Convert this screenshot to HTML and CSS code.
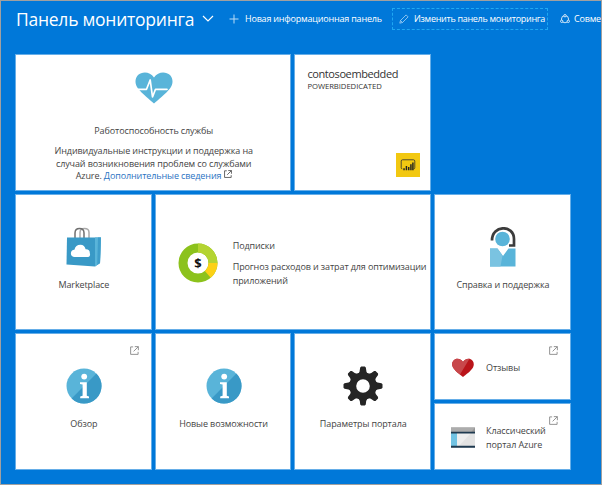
FILE: index.html
```html
<!DOCTYPE html>
<html lang="ru">
<head>
<meta charset="utf-8">
<title>Панель мониторинга</title>
<link rel="stylesheet" href="styles.css">
</head>
<body>
<svg class="defs" width="0" height="0" aria-hidden="true">
  <symbol id="external" viewBox="0 0 10 10"><path d="M3.5 1H.7v8.3H9V6.5M5.3.7h4v4M9.2.8 4 6" fill="none" stroke="currentColor" stroke-width="1"/></symbol>
  <symbol id="info" viewBox="0 0 36 36"><circle cx="18" cy="18" r="17.5" fill="#59b4d9"/><path d="M30.4 5.6A17.5 17.5 0 0 1 5.6 30.4Z" fill="#3999c6"/><circle cx="18.2" cy="8.6" r="2.9" fill="#fff"/><path d="M14 14.2h6.8v13.6l2.200.7v1.700h-8.800v-1.700l2.400-.7V16.500l-2.600-.6Z" fill="#fff"/></symbol>
</svg>
<div class="portal">
  <header class="bar">
    <h1 class="title">Панель мониторинга</h1>
    <svg class="chevron" viewBox="0 0 12 8"><path d="m1 1 5 5 5-5" fill="none" stroke="#fff" stroke-width="1.2"/></svg>
    <a class="command new"><svg class="icon" viewBox="0 0 10 10"><path d="M5 .5v9M.5 5h9" stroke="#b9dcf7" fill="none"/></svg><span>Новая информационная панель</span></a>
    <a class="command edit"><svg class="icon" viewBox="0 0 10 10"><path d="m.8 9.2.7-2.7 5.6-5.6 2 2-5.6 5.6ZM1.5 6.5l2 2" stroke="#a9d3f5" stroke-width=".8" fill="none"/></svg><span>Изменить панель мониторинга</span></a>
    <a class="command share"><svg class="icon" viewBox="0 0 10 10"><circle cx="5" cy="5.2" r="3.6" stroke="#fff" stroke-width=".8" fill="none"/><g fill="#0078d9" stroke="#fff" stroke-width=".8"><circle cx="5" cy="1.7" r="1.2"/><circle cx="1.7" cy="7.3" r="1.2"/><circle cx="8.3" cy="7.3" r="1.2"/></g></svg><span>Совме</span></a>
  </header>
  <main class="tiles">
    <section class="tile wide health">
      <svg class="heart" viewBox="0 0 38 32"><path d="M19 31.5C16 29 6.500 21 3 16.500-.5 12-.2 6.500 3 3 7-.8 15-.8 19 5.500 23-.8 31-.8 35 3c3.200 3.500 3.500 9 0 13.500C31.500 21 22 29 19 31.500Z" fill="#59b4d9"/><path d="M3 17.300h8.500l3.700-9.300 2.300 17 3-7.700H32" fill="none" stroke="#fff" stroke-width="1.700" stroke-linejoin="round" stroke-linecap="round"/></svg>
      <h2 class="label">Работоспособность службы</h2>
      <p class="copy">Индивидуальные инструкции и поддержка на<br>случай возникновения проблем со службами<br>Azure. <a class="link">Дополнительные сведения</a> <svg class="inline-ext"><use href="#external"/></svg></p>
    </section>
    <section class="tile resource">
      <h2 class="resource-name">contosoembedded</h2>
      <p class="resource-type">POWERBIDEDICATED</p>
      <svg class="powerbi" viewBox="0 0 23 23"><path d="M0 0h23v23H0z" fill="#f2c811"/><path d="M6 15.200q-1 0-1-1V7.800q0-1.300 1.300-1.300h10.400q1.300 0 1.300 1.300v6.400q0 1-1 1" fill="none" stroke="#333" stroke-width=".8"/><path d="M7.700 16.500v-2M10 16.500V12.500M12.200 16.500v-3M14.300 16.500V10.800M16.200 16.500V9" stroke="#222" stroke-width="1.400"/></svg>
    </section>
    <section class="tile app market">
      <svg class="glyph" viewBox="0 0 40 40"><g fill="none" stroke-width="1.500"><path d="M15 11V5.500q0-4 4.500-4t4.500 4V11" stroke="#aaa"/><path d="M10 11V6q0-4.500 4.500-4.500T19 6v5" stroke="#707070"/></g><path d="M2 10.500h28l6 0-1 25.500-5 3.500-28.500-2Z" fill="#3999c6"/><path d="m30 10.500 5.800 0-.8 25.500-5 3.500Z" fill="#59b4d9"/><path d="m33 10.500 2.800 0-.8 25.500-2.800 2Z" fill="#3f9ecb"/><path d="M9.500 30q-3.700-.4-3.600-3.800.2-3.200 3.500-3.500 1.200-5 6-5 4.400.2 5.200 4.600 4.300-.2 4.200 3.700 1 3.400-1.500 4Z" fill="#fff"/></svg>
      <h2 class="label">Marketplace</h2>
    </section>
    <section class="tile wide billing">
      <svg class="donut" viewBox="0 0 40 40"><circle cx="20" cy="20" r="15" fill="none" stroke="#8cc21c" stroke-width="9"/><path d="M20 5A15 15 0 0 1 35 20" fill="none" stroke="#b4d432" stroke-width="9"/><path d="M35 20a15 15 0 0 1-5.200 11.300" fill="none" stroke="#fcd116" stroke-width="9"/><text class="dollar" x="20" y="24.800" text-anchor="middle">$</text></svg>
      <div class="billing-text"><h2 class="label">Подписки</h2><p class="copy">Прогноз расходов и затрат для оптимизации<br>приложений</p></div>
    </section>
    <section class="tile app support">
      <svg class="glyph" viewBox="0 0 40 40"><path d="M9 13.500C9-2.500 31-2.500 31 12v6.500h-5" fill="none" stroke="#3c3c3c" stroke-width="2.700"/><circle cx="19.500" cy="12" r="7.300" fill="#59b4d9"/><path d="M7 21.500h7.500L20 29l5.500-7.500h7v18H7Z" fill="#59b4d9"/><path d="M7 21.500h7.500l5 7-2 11H7Z" fill="#7ac3e1"/></svg>
      <h2 class="label">Справка и поддержка</h2>
    </section>
    <section class="tile app">
      <svg class="external"><use href="#external"/></svg>
      <svg class="glyph info"><use href="#info"/></svg>
      <h2 class="label">Обзор</h2>
    </section>
    <section class="tile app">
      <svg class="glyph info"><use href="#info"/></svg>
      <h2 class="label">Новые возможности</h2>
    </section>
    <section class="tile app">
      <svg class="glyph" viewBox="-20 -20 40 40"><defs><path id="tooth" d="M-5-11.500 Q-3-14-2.800-18.500L-1.800-19.500H1.800L2.800-18.500Q3-14 5-11.500Z"/></defs><g fill="#252525"><use href="#tooth"/><use href="#tooth" transform="rotate(45)"/><use href="#tooth" transform="rotate(90)"/><use href="#tooth" transform="rotate(135)"/><use href="#tooth" transform="rotate(180)"/><use href="#tooth" transform="rotate(225)"/><use href="#tooth" transform="rotate(270)"/><use href="#tooth" transform="rotate(315)"/></g><circle r="10.300" fill="none" stroke="#252525" stroke-width="7"/></svg>
      <h2 class="label">Параметры портала</h2>
    </section>
    <div class="stack">
      <section class="tile small">
        <svg class="external"><use href="#external"/></svg>
        <svg class="small-icon" viewBox="0 0 24 24"><path d="M12 21C9 18.500 4 15 2 11.500-.2 7.500 2 3.500 5.500 2.800 8.500 2.500 11 4 12 6c1-2 3.500-3.500 6.500-3.200C22 3.500 24 7.500 22 11.500 20 15 15 18.500 12 21Z" fill="#ba141a"/><path d="M12 6C11 4 8.500 2.500 5.500 2.800 2 3.500-.2 7.500 2 11.500 3.300 14 6.500 16.500 9 18.600L18.500 2.800C15.500 2.500 13 4 12 6Z" fill="#c8474b"/></svg>
        <h2 class="label">Отзывы</h2>
      </section>
      <section class="tile small classic">
        <svg class="external"><use href="#external"/></svg>
        <svg class="small-icon" viewBox="0 0 24 24"><path d="M0 1.500h24v5H0z" fill="#969696"/><path d="M0 1.500h24l-4 5H0Z" fill="#acacac"/><path d="M0 6h24v15.500H0z" fill="#e3e3e3"/><path d="M6 7h14L8 20H6Z" fill="#eee"/><path d="M0 7h6v13H0z" fill="#72c3e3"/><path d="M0 5.700h24v1.700H0zM0 19.800h24v2H0z" fill="#1f3a50"/></svg>
        <h2 class="label">Классический<br>портал Azure</h2>
      </section>
    </div>
  </main>
</div>
</body>
</html>
```
FILE: styles.css
```css
* { box-sizing: border-box; }
body { margin: 0; font-family: "Open Sans", "Noto Sans", sans-serif; }
h1, h2, p { margin: 0; font-weight: 400; }
svg { display: block; flex: none; }
.defs { position: absolute; }
.portal { width: 602px; height: 485px; overflow: hidden; background: #0078d9; border: 1px solid #a0a0a0; }
.bar { display: flex; align-items: center; height: 53px; padding: 0 0 18px 15px; color: #fff; white-space: nowrap; }
.title { width: 179px; font-size: 17.5px; line-height: 24px; letter-spacing: -.25px; margin-top: 1px; }
.chevron { width: 12px; height: 8px; margin-left: 7px; }
.command { display: flex; align-items: center; font-size: 9px; line-height: 14px; letter-spacing: -.2px; }
.icon { width: 10px; height: 10px; }
.new { width: 153px; margin-left: 15px; gap: 6px; }
.edit { width: 156px; height: 22px; margin-left: 10px; padding-left: 6px; gap: 5px; border: 1px dashed #1fa8f2; letter-spacing: -.3px; }
.share { margin-left: 12px; gap: 4px; }
.tiles { display: grid; grid-template-columns: repeat(4, 136.7px); grid-template-rows: repeat(3, 136.7px); gap: 3px; padding-left: 14px; }
.tile { position: relative; background: #fff; background-clip: padding-box; border: 1px solid rgba(255, 255, 255, .4); color: #444; }
.wide { grid-column: span 2; }
.label, .copy { font-size: 9px; line-height: 13px; letter-spacing: -.11px; }
.health { display: flex; flex-direction: column; align-items: center; padding-top: 17px; padding-left: 1px; text-align: center; }
.heart { width: 38px; height: 32px; }
.health .label { margin-top: 20px; }
.health .copy { margin-top: 8px; line-height: 12.5px; white-space: nowrap; }
.link { color: #2b73c2; }
.inline-ext { display: inline-block; width: 8px; height: 8px; vertical-align: 1px; }
.resource { padding: 12px 12px; }
.resource-name { font-size: 11px; line-height: 14px; letter-spacing: -.4px; color: #333; }
.resource-type { font-size: 7.7px; line-height: 10px; letter-spacing: -.05px; color: #333; }
.powerbi { position: absolute; right: 10px; bottom: 13px; width: 24px; height: 24px; }
.app { display: flex; flex-direction: column; align-items: center; padding-top: 32px; padding-left: 1px; white-space: nowrap; }
.market { grid-column: 1; }
.glyph { width: 40px; height: 40px; }
.market .glyph { margin-left: 2px; }
.info { width: 36px; height: 36px; margin: 2px 0; }
.app .label { margin-top: 11px; }
.market .label { margin-top: 11px; }
.billing { display: flex; align-items: center; padding-left: 22px; padding-top: 1px; }
.donut { width: 40px; height: 40px; }
.dollar { font: 700 13px "Open Sans", sans-serif; fill: #111; }
.billing-text { margin-left: 15px; white-space: nowrap; }
.billing-text .label { margin-top: 2px; }
.billing-text .copy { margin-top: 8px; line-height: 14px; }
.external { position: absolute; top: 12px; right: 12px; width: 9px; height: 9px; color: #888; }
.stack { grid-column: 4; display: grid; grid-template-rows: 1fr 1fr; gap: 3px; }
.small { display: flex; align-items: center; padding-left: 16px; padding-top: 2px; }
.small-icon { width: 24px; height: 24px; }
.small .label { margin-left: 11px; white-space: nowrap; }
.classic .label { line-height: 14px; }
```
